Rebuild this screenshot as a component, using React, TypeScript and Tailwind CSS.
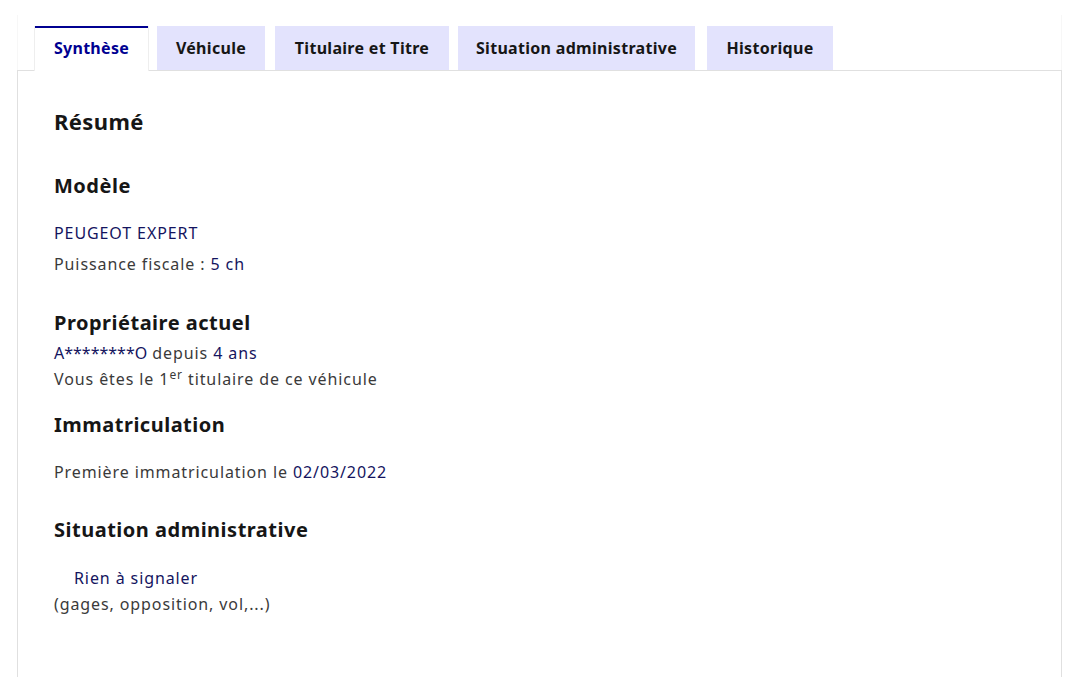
import React from "react";

const tabs = [
  { label: "Synthèse", w: "w-[113px]", ml: "ml-0", active: true },
  { label: "Véhicule", w: "w-[108px]", ml: "ml-[9px]", active: false },
  { label: "Titulaire et Titre", w: "w-[174px]", ml: "ml-[10px]", active: false },
  { label: "Situation administrative", w: "w-[237px]", ml: "ml-[9px]", active: false },
  { label: "Historique", w: "w-[126px]", ml: "ml-[12px]", active: false },
];

const body = "text-[16px] tracking-[0.9px]";
const val = "text-[#14145e]";

export default function App() {
  return (
    <div className="w-[1079px] h-[677px] bg-white overflow-hidden text-[#3a3a3a] font-[family-name:'Noto_Sans',sans-serif]">
      <div className="ml-[17px] mt-[15px] w-[1045px] border-l border-r border-[#f7f7f7]">
        <div className="flex items-end pt-[11px] pl-[17px] h-[55px]">
          {tabs.map((t) => (
            <div
              key={t.label}
              className={`${t.w} ${t.ml} flex items-center justify-center text-[16px] font-bold tracking-[0.3px] ${
                t.active
                  ? "h-[45px] -mb-px pb-[3px] bg-white border-t-2 border-[#000091] text-[#000091] shadow-[1px_0_0_#eeeeee,-1px_0_0_#eeeeee] relative z-10"
                  : "h-[44px] bg-[#e3e3fd] text-[#161616]"
              }`}
            >
              {t.label}
            </div>
          ))}
        </div>
      </div>
      <div className="ml-[17px] w-[1045px] h-[620px] border border-[#e0e0e0] pt-[34px] px-[36px]">
        <h2 className="text-[22px] leading-[32px] font-bold text-[#161616] tracking-[0.4px]">Résumé</h2>

        <h3 className="mt-[35px] text-[20px] leading-[28px] font-bold text-[#161616] tracking-[0.5px]">Modèle</h3>
        <p className={`mt-[21px] leading-[24px] ${body} ${val}`}>PEUGEOT EXPERT</p>
        <p className={`mt-[7px] leading-[24px] ${body}`}>
          Puissance fiscale : <span className={val}>5 ch</span>
        </p>

        <h3 className="mt-[33px] text-[20px] leading-[28px] font-bold text-[#161616] tracking-[0.5px]">Propriétaire actuel</h3>
        <p className={`mt-[3px] leading-[26px] ${body}`}>
          <span className={`${val} tracking-[0px]`}>A********O</span> depuis <span className={val}>4 ans</span>
        </p>
        <p className={`leading-[26px] ${body}`}>
          Vous êtes le 1<sup className="text-[12px]">er</sup> titulaire de ce véhicule
        </p>

        <h3 className="mt-[19px] text-[20px] leading-[28px] font-bold text-[#161616] tracking-[0.5px]">Immatriculation</h3>
        <p className={`mt-[21px] leading-[24px] ${body}`}>
          Première immatriculation le <span className={val}>02/03/2022</span>
        </p>

        <h3 className="mt-[32px] text-[20px] leading-[28px] font-bold text-[#161616] tracking-[0.5px]">Situation administrative</h3>
        <p className={`mt-[21px] pl-[20px] leading-[26px] ${body} ${val}`}>Rien à signaler</p>
        <p className={`leading-[26px] ${body}`}>(gages, opposition, vol,...)</p>
      </div>
    </div>
  );
}
